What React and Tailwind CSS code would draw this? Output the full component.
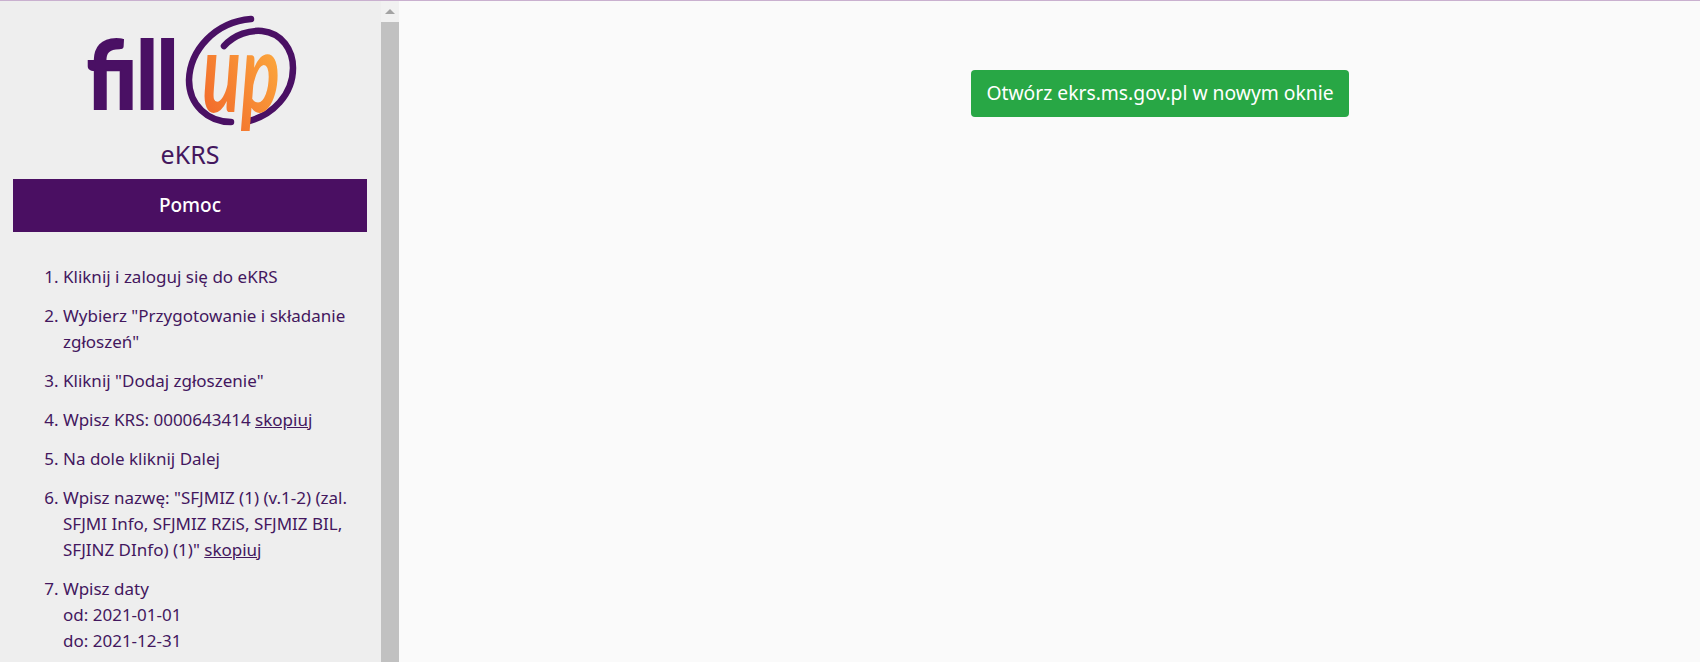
const uiFont = { fontFamily: '"Noto Sans", sans-serif' };

function Logo() {
  return (
    <svg viewBox="60 10 260 130" className="mx-auto block h-[130px] w-[260px] overflow-visible">
      <defs>
        <linearGradient id="upGrad" x1="0" y1="1" x2="1" y2="0">
          <stop offset="0.1" stopColor="#f26a2b" />
          <stop offset="0.9" stopColor="#fdb03f" />
        </linearGradient>
      </defs>
      <text
        x="87"
        y="109"
        fill="#4a1064"
        stroke="#4a1064"
        strokeWidth="2"
        textLength="91"
        lengthAdjust="spacingAndGlyphs"
        fontFamily="Lato, sans-serif"
        fontWeight="900"
        fontSize="94"
      >
        fill
      </text>
      <path d="M251 19 C215 22 190 50 189 80 C189 105 208 122 231 122" fill="none" stroke="#4a1064" strokeWidth="6.5" strokeLinecap="round" />
      <path d="M224 46 C235 34 250 30 262 31 C282 33 293 50 293 68 C293 95 272 115 249 121" fill="none" stroke="#4a1064" strokeWidth="6.5" strokeLinecap="round" />
      <text
        x="202"
        y="112"
        fill="url(#upGrad)"
        textLength="78"
        lengthAdjust="spacingAndGlyphs"
        fontFamily="Lato, sans-serif"
        fontStyle="italic"
        fontWeight="700"
        fontSize="112"
      >
        up
      </text>
    </svg>
  );
}

function Scrollbar() {
  return (
    <div className="flex w-[18px] shrink-0 flex-col bg-[#f1f1f1]">
      <div className="flex h-[21px] items-center justify-center">
        <div className="h-0 w-0 border-x-[5px] border-b-[5px] border-x-transparent border-b-[#a3a3a3]" />
      </div>
      <div className="flex-1 bg-[#c1c1c1]" />
    </div>
  );
}

export default function App() {
  return (
    <div style={uiFont} className="flex h-screen flex-col overflow-hidden bg-[#fafafa]">
      <div className="h-px shrink-0 bg-[#c9b0cf]" />
      <div className="flex min-h-0 flex-1">
        <aside className="w-[381px] shrink-0 overflow-hidden bg-[#eeeeee] pt-[9px] pr-[14px] pl-[13px] text-[#43175e]">
          <Logo />
          <h1 className="text-center text-[25px] leading-[28px] font-normal">eKRS</h1>
          <div className="mt-[11px] flex h-[53px] items-center justify-center bg-[#4a0f62] text-[19px] font-medium text-white">
            Pomoc
          </div>
          <ol className="mt-[32px] list-decimal pl-[50px] text-[17px] leading-[26px]">
            <li className="mb-[13px]">Kliknij i zaloguj się do eKRS</li>
            <li className="mb-[13px]">Wybierz "Przygotowanie i składanie zgłoszeń"</li>
            <li className="mb-[13px]">Kliknij "Dodaj zgłoszenie"</li>
            <li className="mb-[13px]">
              Wpisz KRS: 0000643414 <a className="underline">skopiuj</a>
            </li>
            <li className="mb-[13px]">Na dole kliknij Dalej</li>
            <li className="mb-[13px]">
              Wpisz nazwę: "SFJMIZ (1) (v.1-2) (zal. SFJMI Info, SFJMIZ RZiS, SFJMIZ BIL, SFJINZ DInfo) (1)"{" "}
              <a className="underline">skopiuj</a>
            </li>
            <li className="mb-[13px]">
              Wpisz daty
              <br />
              od: 2021-01-01
              <br />
              do: 2021-12-31
            </li>
          </ol>
        </aside>
        <Scrollbar />
        <main className="min-w-0 flex-1 pt-[69px] pl-[572px]">
          <button className="flex h-[47px] w-[378px] items-center justify-center rounded-[4px] bg-[#28a745] text-[19.3px] text-white">
            Otwórz ekrs.ms.gov.pl w nowym oknie
          </button>
        </main>
      </div>
    </div>
  );
}
